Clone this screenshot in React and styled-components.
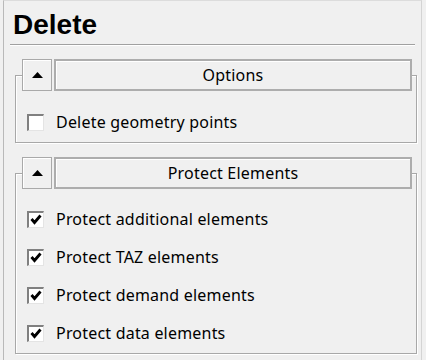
import React from 'react'
import styled, { createGlobalStyle } from 'styled-components'

const GlobalStyle = createGlobalStyle`
  html, body {
    margin: 0;
    padding: 0;
    background: #f0f0f0;
  }
  body {
    font-family: "Noto Sans", "Liberation Sans", sans-serif;
    color: #000;
  }
`

const Panel = styled.div`
  width: 419px;
  height: 360px;
  margin-left: 3px;
  border-left: 1px solid #b9b9b9;
  border-right: 1px solid #d4d4d4;
  border-top: 1px solid #dcdcdc;
  box-sizing: border-box;
  padding: 0 6px 0 6px;
  display: flex;
  flex-direction: column;
`

const Title = styled.h1`
  margin: 0;
  height: 44px;
  padding: 8px 0 0 3px;
  box-sizing: border-box;
  font-family: "Liberation Sans", Arial, sans-serif;
  font-weight: bold;
  font-size: 28px;
  line-height: 32px;
  border-bottom: 1px solid #a0a0a0;
  box-shadow: 0 1px 0 #ffffff;
`

const Group = styled.div`
  display: flex;
  flex-direction: column;
  margin: ${p => p.$top}px 0 0 5px;
  width: 402px;
`

const Header = styled.div`
  display: flex;
  gap: 2px;
  height: 32px;
  margin: 0 5px 0 7px;
  position: relative;
  z-index: 1;
  background: #f0f0f0;
`

const ArrowButton = styled.div`
  width: 30px;
  height: 32px;
  box-sizing: border-box;
  border: 1px solid #a9a9a9;
  box-shadow: inset 1px 1px 0 #ffffff;
  background: #f0f0f0;
  display: flex;
  align-items: center;
  justify-content: center;
`

const TitleBar = styled.div`
  flex: 1;
  box-sizing: border-box;
  border: 2px solid #adadad;
  box-shadow: inset 1px 1px 0 #ffffff;
  background: #f0f0f0;
  display: flex;
  align-items: center;
  justify-content: center;
  font-size: 16px;
  letter-spacing: 0.2px;
`

const Frame = styled.div`
  margin-top: -16px;
  padding: ${p => 16 + p.$pad}px 0 0 11px;
  height: ${p => p.$height}px;
  box-sizing: border-box;
  border: 1px solid #a8a8a8;
  box-shadow: inset 1px 1px 0 #ffffff, 1px 1px 0 #ffffff;
`

const Row = styled.label`
  display: flex;
  align-items: center;
  gap: 12px;
  height: 38px;
  font-size: 16px;
  letter-spacing: 0.2px;
`

const Box = styled.span`
  width: 17px;
  height: 17px;
  box-sizing: border-box;
  background: #ffffff;
  border-style: solid;
  border-width: 2px 1px 1px 2px;
  border-color: #808080 #e4e4e4 #e4e4e4 #808080;
  display: flex;
  align-items: center;
  justify-content: center;
`

const Triangle = () => (
  <svg width="11" height="6" viewBox="0 0 11 6">
    <polygon points="0,6 5.5,0 11,6" fill="#000" />
  </svg>
)

const Check = () => (
  <svg width="12" height="11" viewBox="0 0 12 11">
    <polyline points="1.5,5 4.5,8.5 10.5,1.5" fill="none" stroke="#000" strokeWidth="2.8" />
  </svg>
)

const CheckRow = ({ label, checked }) => (
  <Row>
    <Box>{checked && <Check />}</Box>
    {label}
  </Row>
)

const Section = ({ title, top, pad, height, children }) => (
  <Group $top={top}>
    <Header>
      <ArrowButton><Triangle /></ArrowButton>
      <TitleBar>{title}</TitleBar>
    </Header>
    <Frame $pad={pad} $height={height}>{children}</Frame>
  </Group>
)

const App = () => {
  const protect = ['additional', 'TAZ', 'demand', 'data']
  return (
    <>
      <GlobalStyle />
      <Panel>
        <Title>Delete</Title>
        <Section title="Options" top={14} pad={11} height={68}>
          <CheckRow label="Delete geometry points" />
        </Section>
        <Section title="Protect Elements" top={14} pad={10} height={181}>
          {protect.map(p => (
            <CheckRow key={p} label={`Protect ${p} elements`} checked />
          ))}
        </Section>
      </Panel>
    </>
  )
}

export default App
